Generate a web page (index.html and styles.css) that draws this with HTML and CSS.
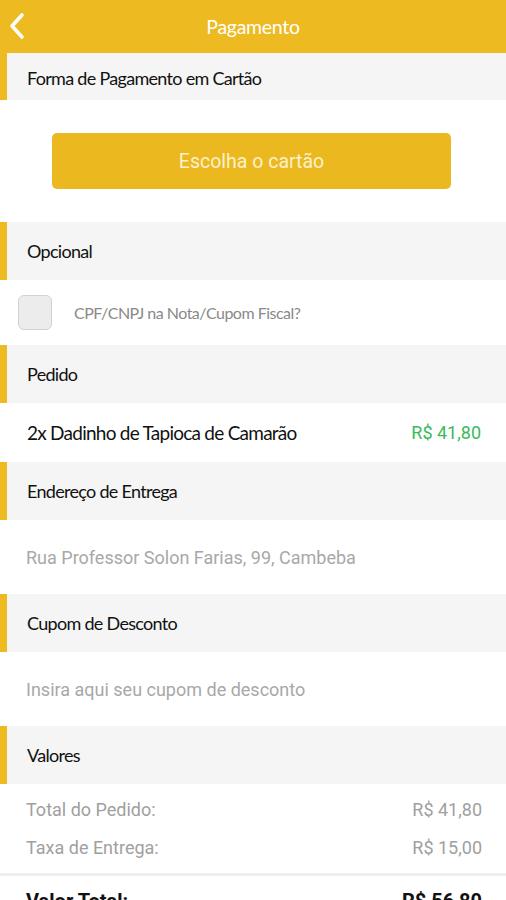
FILE: index.html
```html
<!DOCTYPE html>
<html>
<head>
<title>Pagamento</title>
<meta name="viewport" content="width=device-width, initial-scale=1.0">
<link rel="stylesheet" href="styles.css">
</head>
<body>
<div class="topbar">
  <svg class="back" width="20" height="28" viewBox="0 0 20 28">
    <path d="M15 3 L5 14 L15 25" fill="none" stroke="#fff" stroke-width="3.6" stroke-linecap="round" stroke-linejoin="round"/>
  </svg>
  <span class="title">Pagamento</span>
</div>

<div class="section first">Forma de Pagamento em Cartão</div>
<div class="btn-area">
  <div class="btn">Escolha o cartão</div>
</div>

<div class="section">Opcional</div>
<div class="row check-row">
  <span class="checkbox"></span>
  <span class="check-label">CPF/CNPJ na Nota/Cupom Fiscal?</span>
</div>

<div class="section">Pedido</div>
<div class="row item-row">
  <span class="item">2x Dadinho de Tapioca de Camarão</span>
  <span class="price">R$ 41,80</span>
</div>

<div class="section">Endereço de Entrega</div>
<div class="row field-row">Rua Professor Solon Farias, 99, Cambeba</div>

<div class="section">Cupom de Desconto</div>
<div class="row field-row">Insira aqui seu cupom de desconto</div>

<div class="section">Valores</div>
<div class="values">
  <div class="value-line"><span>Total do Pedido:</span><span>R$ 41,80</span></div>
  <div class="value-line"><span>Taxa de Entrega:</span><span>R$ 15,00</span></div>
</div>
<div class="total">
  <span>Valor Total:</span><span>R$ 56,80</span>
</div>
</body>
</html>
```

FILE: styles.css
```css
body {
  margin: 0;
  background: #fff;
  font-family: Lato, "Noto Sans", sans-serif;
  overflow: hidden;
}

.topbar {
  height: 53px;
  background: #edba21;
  display: flex;
  align-items: center;
  justify-content: center;
  position: relative;
}

.back {
  position: absolute;
  left: 7px;
  top: 12px;
}

.title {
  color: #fff;
  font-size: 19.5px;
  letter-spacing: -0.3px;
}

.section {
  height: 58px;
  background: #f5f5f5;
  border-left: 7px solid #edba21;
  box-sizing: border-box;
  display: flex;
  align-items: center;
  padding-left: 20px;
  font-size: 18px;
  color: #111;
  letter-spacing: -0.7px;
}

.section.first {
  height: 47px;
  padding-top: 2px;
}

.btn-area {
  height: 122px;
  display: flex;
  align-items: center;
  justify-content: center;
  padding-right: 3px;
}

.btn {
  width: 399px;
  height: 56px;
  background: #ebb820;
  border-radius: 5px;
  display: flex;
  align-items: center;
  justify-content: center;
  color: #fdf1cc;
  font-family: Roboto, "Liberation Sans", sans-serif;
  font-size: 19.5px;
}

.row {
  display: flex;
  align-items: center;
  box-sizing: border-box;
}

.check-row {
  height: 65px;
  padding-left: 18px;
  gap: 22px;
}

.checkbox {
  width: 32px;
  height: 33px;
  background: #ececec;
  border: 1px solid #d2d2d2;
  border-radius: 6px;
}

.check-label {
  font-size: 16px;
  color: #8a8a8a;
  letter-spacing: -0.5px;
}

.item-row {
  height: 59px;
  padding: 0 25px 0 27px;
  justify-content: space-between;
}

.item {
  font-size: 19px;
  color: #111;
  letter-spacing: -0.75px;
}

.price {
  font-family: Roboto, "Liberation Sans", sans-serif;
  font-size: 18px;
  color: #3bb95b;
}

.field-row {
  height: 74px;
  padding-left: 26px;
  font-family: Roboto, "Liberation Sans", sans-serif;
  font-size: 18px;
  color: #a8a8a8;
}

.values {
  padding: 6px 24px 7px 26px;
  display: flex;
  flex-direction: column;
}

.value-line {
  height: 38px;
  display: flex;
  align-items: center;
  justify-content: space-between;
  font-family: Roboto, "Liberation Sans", sans-serif;
  font-size: 18px;
  color: #a0a0a0;
}

.total {
  border-top: 3px solid #eeeeee;
  padding: 13px 24px 0 26px;
  display: flex;
  justify-content: space-between;
  font-family: Roboto, "Liberation Sans", sans-serif;
  font-size: 20px;
  font-weight: bold;
  color: #111;
}
```
